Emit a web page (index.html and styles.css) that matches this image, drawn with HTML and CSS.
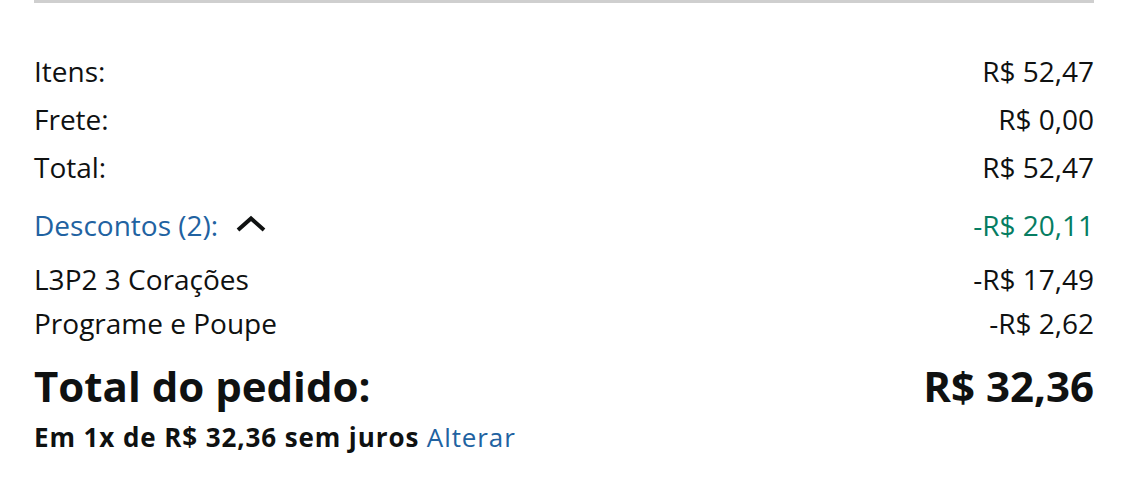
FILE: index.html
```html
<!DOCTYPE html>
<html lang="pt-BR">
<head>
<meta charset="utf-8">
<link rel="stylesheet" href="styles.css">
</head>
<body>
<div class="summary">
  <div class="row r1"><span>Itens:</span><span>R$ 52,47</span></div>
  <div class="row r2"><span>Frete:</span><span>R$ 0,00</span></div>
  <div class="row r3"><span>Total:</span><span>R$ 52,47</span></div>
  <div class="row r4">
    <span class="link">Descontos (2):
      <svg class="chev" width="32" height="18" viewBox="0 0 32 18"><path d="M3 15 L16 3.5 L29 15" fill="none" stroke="#0f1111" stroke-width="4"/></svg>
    </span>
    <span class="green">-R$ 20,11</span>
  </div>
  <div class="row r5"><span>L3P2 3 Corações</span><span>-R$ 17,49</span></div>
  <div class="row r6"><span>Programe e Poupe</span><span>-R$ 2,62</span></div>
  <div class="row big"><span>Total do pedido:</span><span>R$ 32,36</span></div>
  <div class="installments">Em 1x de R$ 32,36 sem juros <span class="link">Alterar</span></div>
</div>
</body>
</html>
```
FILE: styles.css
```css
body {
  margin: 0;
  background: #fff;
  font-family: "Open Sans", "Liberation Sans", sans-serif;
  color: #0f1111;
}
.summary {
  margin: 0 49px 0 34px;
  border-top: 3px solid #cfcfcf;
  padding-top: 44px;
}
.row {
  display: flex;
  justify-content: space-between;
  align-items: baseline;
  font-size: 28px;
  font-weight: 500;
  line-height: 48px;
}
.r4 { margin-top: 10px; }
.r5 { margin-top: 8px; line-height: 44px; }
.r6 { line-height: 44px; }
.link { color: #2162a1; }
.green { color: #067d62; }
.chev { margin-left: 10px; vertical-align: 3px; }
.big {
  font-size: 42px;
  font-weight: 700;
  line-height: 62px;
  margin-top: 10px;
}
.installments {
  font-size: 26px;
  font-weight: 700;
  letter-spacing: 0.9px;
  line-height: 40px;
}
.installments .link { font-weight: 500; }
```
